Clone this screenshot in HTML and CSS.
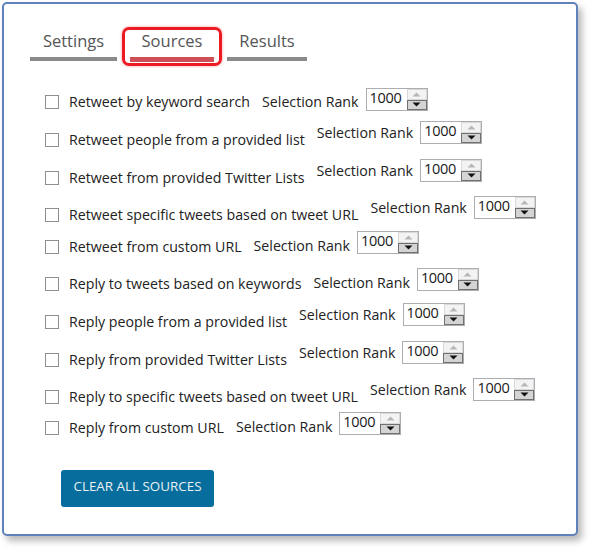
FILE: index.html
```html
<!DOCTYPE html>
<html>
<head>
<meta charset="utf-8">
<link rel="stylesheet" href="styles.css">
</head>
<body>
<div class="window">
  <div class="tabs">
    <div class="tab tab-settings"><span class="tab-text">Settings</span><span class="bar"></span></div>
    <div class="tab tab-active"><span class="tab-text">Sources</span><span class="bar"></span></div>
    <div class="tab tab-results"><span class="tab-text">Results</span><span class="bar"></span></div>
  </div>

  <div class="rows">
    <div class="row level first">
      <label class="check"><span class="box"></span><span class="label">Retweet by keyword search</span></label>
      <span class="rank">Selection Rank</span>
      <div class="spin"><span class="val">1000</span><span class="btns"><span class="up"><svg width="9" height="5" viewBox="0 0 9 5"><path d="M0.5 4.5 L4.5 0.5 L8.5 4.5 Z" fill="#b7b7b7"/></svg></span><span class="down"><svg width="9" height="5" viewBox="0 0 9 5"><path d="M0.5 0.5 L4.5 4.5 L8.5 0.5 Z" fill="#111"/></svg></span></span></div>
    </div>
    <div class="row raised">
      <label class="check"><span class="box"></span><span class="label">Retweet people from a provided list</span></label>
      <span class="rank">Selection Rank</span>
      <div class="spin"><span class="val">1000</span><span class="btns"><span class="up"><svg width="9" height="5" viewBox="0 0 9 5"><path d="M0.5 4.5 L4.5 0.5 L8.5 4.5 Z" fill="#b7b7b7"/></svg></span><span class="down"><svg width="9" height="5" viewBox="0 0 9 5"><path d="M0.5 0.5 L4.5 4.5 L8.5 0.5 Z" fill="#111"/></svg></span></span></div>
    </div>
    <div class="row raised">
      <label class="check"><span class="box"></span><span class="label">Retweet from provided Twitter Lists</span></label>
      <span class="rank">Selection Rank</span>
      <div class="spin"><span class="val">1000</span><span class="btns"><span class="up"><svg width="9" height="5" viewBox="0 0 9 5"><path d="M0.5 4.5 L4.5 0.5 L8.5 4.5 Z" fill="#b7b7b7"/></svg></span><span class="down"><svg width="9" height="5" viewBox="0 0 9 5"><path d="M0.5 0.5 L4.5 4.5 L8.5 0.5 Z" fill="#111"/></svg></span></span></div>
    </div>
    <div class="row raised">
      <label class="check"><span class="box"></span><span class="label">Retweet specific tweets based on tweet URL</span></label>
      <span class="rank">Selection Rank</span>
      <div class="spin"><span class="val">1000</span><span class="btns"><span class="up"><svg width="9" height="5" viewBox="0 0 9 5"><path d="M0.5 4.5 L4.5 0.5 L8.5 4.5 Z" fill="#b7b7b7"/></svg></span><span class="down"><svg width="9" height="5" viewBox="0 0 9 5"><path d="M0.5 0.5 L4.5 4.5 L8.5 0.5 Z" fill="#111"/></svg></span></span></div>
    </div>
    <div class="row level">
      <label class="check"><span class="box"></span><span class="label">Retweet from custom URL</span></label>
      <span class="rank">Selection Rank</span>
      <div class="spin"><span class="val">1000</span><span class="btns"><span class="up"><svg width="9" height="5" viewBox="0 0 9 5"><path d="M0.5 4.5 L4.5 0.5 L8.5 4.5 Z" fill="#b7b7b7"/></svg></span><span class="down"><svg width="9" height="5" viewBox="0 0 9 5"><path d="M0.5 0.5 L4.5 4.5 L8.5 0.5 Z" fill="#111"/></svg></span></span></div>
    </div>
    <div class="row level">
      <label class="check"><span class="box"></span><span class="label">Reply to tweets based on keywords</span></label>
      <span class="rank">Selection Rank</span>
      <div class="spin"><span class="val">1000</span><span class="btns"><span class="up"><svg width="9" height="5" viewBox="0 0 9 5"><path d="M0.5 4.5 L4.5 0.5 L8.5 4.5 Z" fill="#b7b7b7"/></svg></span><span class="down"><svg width="9" height="5" viewBox="0 0 9 5"><path d="M0.5 0.5 L4.5 4.5 L8.5 0.5 Z" fill="#111"/></svg></span></span></div>
    </div>
    <div class="row raised">
      <label class="check"><span class="box"></span><span class="label">Reply people from a provided list</span></label>
      <span class="rank">Selection Rank</span>
      <div class="spin"><span class="val">1000</span><span class="btns"><span class="up"><svg width="9" height="5" viewBox="0 0 9 5"><path d="M0.5 4.5 L4.5 0.5 L8.5 4.5 Z" fill="#b7b7b7"/></svg></span><span class="down"><svg width="9" height="5" viewBox="0 0 9 5"><path d="M0.5 0.5 L4.5 4.5 L8.5 0.5 Z" fill="#111"/></svg></span></span></div>
    </div>
    <div class="row raised">
      <label class="check"><span class="box"></span><span class="label">Reply from provided Twitter Lists</span></label>
      <span class="rank">Selection Rank</span>
      <div class="spin"><span class="val">1000</span><span class="btns"><span class="up"><svg width="9" height="5" viewBox="0 0 9 5"><path d="M0.5 4.5 L4.5 0.5 L8.5 4.5 Z" fill="#b7b7b7"/></svg></span><span class="down"><svg width="9" height="5" viewBox="0 0 9 5"><path d="M0.5 0.5 L4.5 4.5 L8.5 0.5 Z" fill="#111"/></svg></span></span></div>
    </div>
    <div class="row raised">
      <label class="check"><span class="box"></span><span class="label">Reply to specific tweets based on tweet URL</span></label>
      <span class="rank">Selection Rank</span>
      <div class="spin"><span class="val">1000</span><span class="btns"><span class="up"><svg width="9" height="5" viewBox="0 0 9 5"><path d="M0.5 4.5 L4.5 0.5 L8.5 4.5 Z" fill="#b7b7b7"/></svg></span><span class="down"><svg width="9" height="5" viewBox="0 0 9 5"><path d="M0.5 0.5 L4.5 4.5 L8.5 0.5 Z" fill="#111"/></svg></span></span></div>
    </div>
    <div class="row level">
      <label class="check"><span class="box"></span><span class="label">Reply from custom URL</span></label>
      <span class="rank">Selection Rank</span>
      <div class="spin"><span class="val">1000</span><span class="btns"><span class="up"><svg width="9" height="5" viewBox="0 0 9 5"><path d="M0.5 4.5 L4.5 0.5 L8.5 4.5 Z" fill="#b7b7b7"/></svg></span><span class="down"><svg width="9" height="5" viewBox="0 0 9 5"><path d="M0.5 0.5 L4.5 4.5 L8.5 0.5 Z" fill="#111"/></svg></span></span></div>
    </div>
  </div>

  <button class="clear">CLEAR ALL SOURCES</button>
</div>
</body>
</html>
```

FILE: styles.css
```css
* { box-sizing: border-box; }

html, body {
  margin: 0;
  padding: 0;
  background: #ffffff;
}

body {
  font-family: "Open Sans", "Noto Sans", sans-serif;
  color: #222;
  width: 593px;
  height: 552px;
  overflow: hidden;
}

.window {
  margin: 2px 0 0 2px;
  width: 576px;
  height: 534px;
  border: 2px solid #5f82bb;
  border-radius: 5px;
  background: #fff;
  box-shadow: 4px 5px 7px rgba(0, 0, 0, 0.28);
  padding: 23px 0 0 26px;
}

/* Tabs */
.tabs {
  display: flex;
  gap: 5px;
  height: 39px;
}

.tab {
  display: flex;
  flex-direction: column;
  align-items: center;
  padding-top: 4px;
}

.tab-settings { width: 87px; }
.tab-results { width: 80px; }

.tab-text {
  font-size: 16.5px;
  line-height: 20px;
  color: #555;
}

.bar {
  display: block;
  align-self: stretch;
  height: 4px;
  margin-top: 6px;
  background: #8a8a8a;
}

.tab-active {
  width: 100px;
  border: 3px solid #ec1b23;
  border-radius: 7px;
  padding: 1px 0 0;
  box-shadow: 0 0 3px rgba(236, 27, 35, 0.45);
}

.tab-active .bar {
  margin: 6px 5px 0;
  height: 5px;
  background: #cf4f56;
}

/* Rows */
.rows {
  display: flex;
  flex-direction: column;
  margin-top: 22px;
  padding-left: 15px;
}

.row {
  display: flex;
  align-items: flex-start;
  height: 23px;
}

/* uneven spacing between rows, as in the original form */
.row:nth-child(2) { margin-top: 10px; }
.row:nth-child(3) { margin-top: 15px; }
.row:nth-child(4) { margin-top: 14px; }
.row:nth-child(5) { margin-top: 12px; }
.row:nth-child(6) { margin-top: 14px; }
.row:nth-child(7) { margin-top: 12px; }
.row:nth-child(8) { margin-top: 15px; }
.row:nth-child(9) { margin-top: 14px; }
.row:nth-child(10) { margin-top: 11px; }

.check {
  display: flex;
  align-items: center;
  gap: 10px;
}

.box {
  width: 14px;
  height: 14px;
  border: 1px solid #8f8f8f;
  background: #fff;
}

.label, .rank {
  font-size: 14.2px;
  line-height: 18px;
  color: #222;
  white-space: nowrap;
}

.rank {
  margin-left: 12px;
  margin-right: 7px;
}

.level .check { margin-top: 7px; }
.level .rank { margin-top: 6px; }
.level.first .check { margin-top: 5px; }
.level.first .rank { margin-top: 5px; }

.raised .check { margin-top: 10px; }
.raised .rank { margin-top: 3px; }

/* Spinner */
.spin {
  display: flex;
  height: 23px;
  border: 1px solid #abadb3;
  background: #fff;
}

.val {
  width: 40px;
  font-size: 14.5px;
  line-height: 18px;
  padding: 0 0 0 3px;
  color: #1a1a1a;
  letter-spacing: -0.3px;
}

.btns {
  display: flex;
  flex-direction: column;
  width: 20px;
}

.up, .down {
  flex: 1;
  display: flex;
  align-items: center;
  justify-content: center;
}

.up {
  background: #f3f3f3;
  border: 1px solid #d9d9d9;
}

.down {
  background: #d4d4d4;
  border: 1px solid #707070;
}

/* Button */
.clear {
  display: block;
  margin: 35px 0 0 31px;
  width: 153px;
  height: 37px;
  border: none;
  border-radius: 3px;
  background: #066d9c;
  color: #e8f1f6;
  font-family: "Open Sans", "Noto Sans", sans-serif;
  font-size: 13.4px;
  padding: 0 0 5px;
}
```
